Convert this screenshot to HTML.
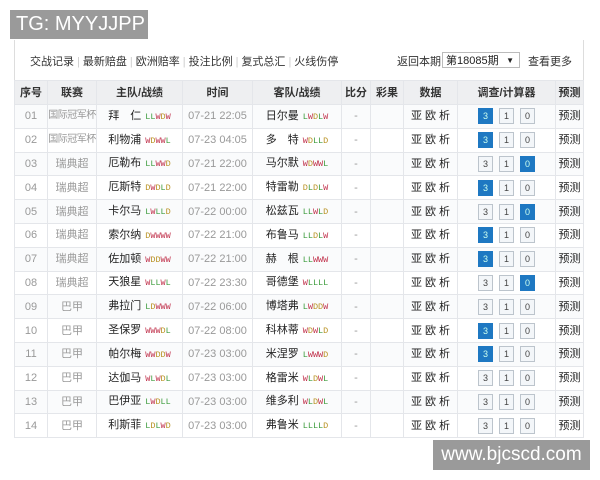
<!DOCTYPE html>
<html><head><meta charset="utf-8"><style>
body{margin:0;width:600px;height:480px;background:#fff;font-family:"Liberation Sans","Noto Sans CJK SC",sans-serif;position:relative;overflow:hidden}
.tg{position:absolute;left:10px;top:10px;width:138px;height:29px;background:#9a9a9a;color:#fff;font-size:20px;line-height:29px;padding-left:6px;box-sizing:border-box}
.wm{position:absolute;left:433px;top:440px;width:157px;height:30px;background:#9a9a9a;color:#fff;font-size:19px;line-height:30px;text-align:center}
.frame{position:absolute;left:14px;top:40px;width:568px;height:398px;border-left:1px solid #ddd;border-right:1px solid #ddd}
.nav{position:absolute;left:30px;top:53px;font-size:11px;color:#333}
.nav span{color:#ccc;margin:0 3px}
.ret{position:absolute;left:397px;top:53px;font-size:11px;color:#333}
.sel{position:absolute;left:442px;top:52px;width:78px;height:16px;border:1px solid #bbb;font-size:11px;line-height:16px;padding-left:3px;box-sizing:border-box;color:#222}
.sel b{position:absolute;right:5px;font-size:8px}
.more{position:absolute;left:528px;top:53px;font-size:11px;color:#333}
table{position:absolute;left:14px;top:80px;width:569px;border-collapse:collapse;font-size:11px;table-layout:fixed}
td,th{border:1px solid #e4e6ea;text-align:center;padding:0;height:22.8px;white-space:nowrap;overflow:hidden;line-height:14px}
th{background:#eeeff1;height:23px;font-weight:bold;color:#333;font-size:11px}
td{color:#222}
tr:nth-child(odd) td{background:#fafbfc}
.g{color:#999}
.s{font-size:10px;letter-spacing:-0.5px}
.r{font-family:"Liberation Mono",monospace;font-size:8.5px;margin-left:4px}
.W{color:#c0304a}.D{color:#b89020}.L{color:#3a9a3a}
.bx{display:inline-block;width:13px;height:14px;border:1px solid #bcc4cc;background:#f3f6f9;font-size:9px;line-height:14px;color:#444;margin:0 3px;vertical-align:middle}
.bx.on{background:#1e78c2;border-color:#1e78c2;color:#cfe}
</style></head><body>
<div class="tg">TG: MYYJJPP</div>
<div class="frame"></div>
<div class="nav">交战记录<span>|</span>最新赔盘<span>|</span>欧洲赔率<span>|</span>投注比例<span>|</span>复式总汇<span>|</span>火线伤停</div>
<div class="ret">返回本期</div>
<div class="sel">第18085期<b>▼</b></div>
<div class="more">查看更多</div>
<table>
<colgroup><col style="width:33px"><col style="width:49px"><col style="width:86px"><col style="width:70px"><col style="width:89px"><col style="width:29px"><col style="width:33px"><col style="width:54px"><col style="width:98px"><col style="width:28px"></colgroup>
<tr><th>序号</th><th>联赛</th><th>主队/战绩</th><th>时间</th><th>客队/战绩</th><th>比分</th><th>彩果</th><th>数据</th><th>调查/计算器</th><th>预测</th></tr>
<tbody id="tb"></tbody>
</table>
<div class="wm">www.bjcscd.com</div>
<script>
var d=[["01","国际冠军杯","拜　仁","LLWDW","07-21 22:05","日尔曼","LWDLW",3],
["02","国际冠军杯","利物浦","WDWWL","07-23 04:05","多　特","WDLLD",3],
["03","瑞典超","厄勒布","LLWWD","07-21 22:00","马尔默","WDWWL",0],
["04","瑞典超","厄斯特","DWDLD","07-21 22:00","特雷勒","DLDLW",3],
["05","瑞典超","卡尔马","LWLLD","07-22 00:00","松兹瓦","LLWLD",0],
["06","瑞典超","索尔纳","DWWWW","07-22 21:00","布鲁马","LLDLW",3],
["07","瑞典超","佐加顿","WDDWW","07-22 21:00","赫　根","LLWWW",3],
["08","瑞典超","天狼星","WLLWL","07-22 23:30","哥德堡","WLLLL",0],
["09","巴甲","弗拉门","LDWWW","07-22 06:00","博塔弗","LWDDW",-1],
["10","巴甲","圣保罗","WWWDL","07-22 08:00","科林蒂","WDWLD",3],
["11","巴甲","帕尔梅","WWDDW","07-23 03:00","米涅罗","LWWWD",3],
["12","巴甲","达伽马","WLWDL","07-23 03:00","格雷米","WLDWL",-1],
["13","巴甲","巴伊亚","LWDLL","07-23 03:00","维多利","WLDWL",-1],
["14","巴甲","利斯菲","LDLWD","07-23 03:00","弗鲁米","LLLLD",-1]];
function rec(s){return '<span class="r">'+s.split('').map(c=>'<span class="'+c+'">'+c+'</span>').join('')+'</span>'}
var h='';d.forEach(r=>{h+='<tr><td class="g">'+r[0]+'</td><td class="g'+(r[1].length>3?' s':'')+'">'+r[1]+'</td><td>'+r[2]+rec(r[3])+'</td><td class="g">'+r[4]+'</td><td>'+r[5]+rec(r[6])+'</td><td class="g">-</td><td></td><td>亚 欧 析</td><td><span class="bx'+(r[7]==3?' on':'')+'">3</span><span class="bx">1</span><span class="bx'+(r[7]==0?' on':'')+'">0</span></td><td>预测</td></tr>'});
document.getElementById('tb').innerHTML=h;
</script>
</body></html>
